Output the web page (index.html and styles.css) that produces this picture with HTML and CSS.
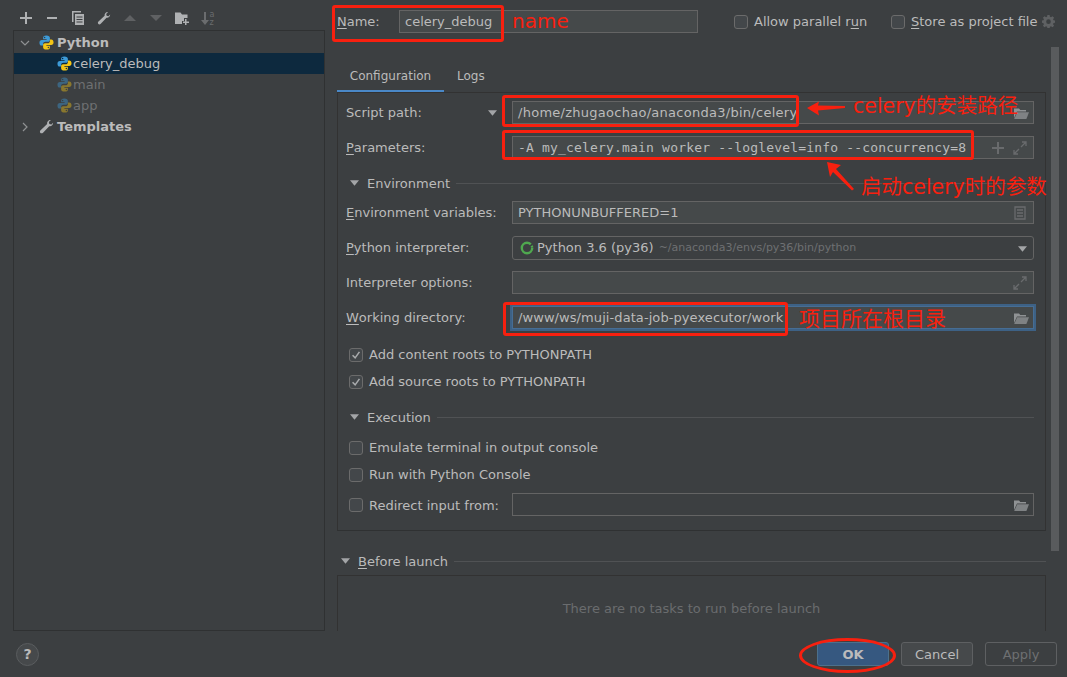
FILE: index.html
```html
<!DOCTYPE html>
<html lang="en">
<head>
<meta charset="utf-8">
<title>Run/Debug Configurations</title>
<link rel="stylesheet" href="styles.css">
</head>
<body>
<svg class="defs" width="0" height="0" aria-hidden="true">
  <defs>
    <symbol id="py" viewBox="0 0 16 16">
      <path fill="#3d9bd8" d="M7.900 .5C4.900 .5 4.400 1.600 4.400 3v1.600h3.700v.7H3C1.500 5.300.5 6.300.5 8.200c0 2 1 3.100 2.300 3.100H4.400V9.400c0-1.300 1.100-2.300 2.400-2.300h2.800c1.100 0 2-.8 2-1.900V3C11.600 1.600 10.400.5 7.900.5zM6 1.900a.8.8 0 1 1 0 1.600a.8.8 0 0 1 0-1.600z"/>
      <path fill="#f4c516" d="M8.100 15.500c3 0 3.500-1.100 3.500-2.500v-1.600H7.900v-.7H13c1.500 0 2.500-1 2.500-2.900 0-2-1-3.100-2.300-3.100H11.600v1.900c0 1.300-1.100 2.300-2.400 2.300H6.400c-1.100 0-2 .8-2 1.900V13c0 1.400 1.200 2.500 3.700 2.500zM10 14.100a.8.8 0 1 1 0-1.600a.8.8 0 0 1 0 1.600z"/>
    </symbol>
    <symbol id="folder" viewBox="0 0 16 14">
      <path fill="#8f9294" d="M1 2.500h5l1.300 1.500H13v1.500H4L1 12z"/>
      <path fill="#7f8284" d="M4.200 6.300H16l-2.600 6.700H1.200z"/>
    </symbol>
    <symbol id="expand" viewBox="0 0 14 14">
      <path fill="none" stroke="#696b6d" stroke-width="1.300" d="M8 6l4.500-4.500M9 1h4v4M6 8l-4.500 4.500M1 9v4h4"/>
    </symbol>
    <symbol id="wrench" viewBox="0 0 16 16">
      <path fill="#afb1b3" d="M15 4.300c0 2.200-2 3.800-4.100 3.300L4.300 14.600c-.9.900-2.100.9-2.800.2s-.7-1.900.2-2.700l7-6.700C8.200 3.200 10.200.8 12.700 1.100L10.500 3.300l.5 2.100 2.200.5L15 3.900z"/>
    </symbol>
    <symbol id="chk" viewBox="0 0 14 14">
      <path fill="none" stroke="#a9abad" stroke-width="1.800" d="M3 7.300l3 3 5-7"/>
    </symbol>
    <symbol id="tri" viewBox="0 0 10 6">
      <path fill="#a3a5a7" d="M0 0h10L5 6z"/>
    </symbol>
  </defs>
</svg>

<div class="dialog">
  <div class="main">
    <aside class="sidebar">
      <div class="toolbar">
        <svg class="tool" viewBox="0 0 14 14"><path fill="#afb1b3" d="M6 1h2v5h5v2H8v5H6V8H1V6h5z"/></svg>
        <svg class="tool" viewBox="0 0 14 14"><path fill="#afb1b3" d="M2 6h10v2H2z"/></svg>
        <svg class="tool" viewBox="0 0 14 14"><path fill="#afb1b3" d="M1 0h9v1.500H2.500V11H1z"/><path fill="#afb1b3" d="M4 3h9v11H4zm1.500 2.500v1h6v-1zm0 2.500v1h6V8zm0 2.500v1h6v-1z" fill-rule="evenodd"/></svg>
        <svg class="tool"><use href="#wrench"/></svg>
        <svg class="tool" viewBox="0 0 14 14"><path fill="#5f6163" d="M1 10l6-6 6 6z"/></svg>
        <svg class="tool" viewBox="0 0 14 14"><path fill="#5f6163" d="M1 4l6 6 6-6z"/></svg>
        <svg class="tool" viewBox="0 0 14 14"><path fill="#afb1b3" d="M0 1.500h5.500L7 3.500h5.500V7H9v3H7v3H0z"/><path fill="#afb1b3" d="M10 8h1.500v2.500H14V12h-2.500v2H10v-2H8v-1.500h2z"/></svg>
        <svg class="tool sort" viewBox="0 0 16 16"><path fill="#6a6c6e" d="M4 2h2v8h3l-4 5-4-5h3z"/><text x="9.500" y="7" class="sort-t">a</text><text x="9.500" y="15" class="sort-t">z</text></svg>
      </div>
      <div class="tree">
        <div class="tree-row top">
          <svg class="arrow" viewBox="0 0 10 10"><path fill="none" stroke="#8f9193" stroke-width="1.200" d="M1 3l4 4 4-4"/></svg>
          <svg class="ico"><use href="#py"/></svg>
          <span class="strong">Python</span>
        </div>
        <div class="tree-row child selected">
          <svg class="ico"><use href="#py"/></svg><span class="bright">celery_debug</span>
        </div>
        <div class="tree-row child dim">
          <svg class="ico"><use href="#py"/></svg><span>main</span>
        </div>
        <div class="tree-row child dim">
          <svg class="ico"><use href="#py"/></svg><span>app</span>
        </div>
        <div class="tree-row top">
          <svg class="arrow" viewBox="0 0 10 10"><path fill="none" stroke="#8f9193" stroke-width="1.200" d="M3 1l4 4-4 4"/></svg>
          <svg class="ico"><use href="#wrench"/></svg>
          <span class="strong">Templates</span>
        </div>
      </div>
    </aside>

    <section class="content">
      <div class="name-row">
        <label class="name-label"><u>N</u>ame:</label>
        <div class="field name-field">celery_debug</div>
        <label class="check top-check parallel"><span class="box"></span>Allow parallel r<u>u</u>n</label>
        <label class="check top-check store"><span class="box"></span><span><u>S</u>tore as project file</span></label>
        <svg class="gear" viewBox="0 0 14 14"><path fill="#5f6163" fill-rule="evenodd" d="M5.800 0h2.400l.3 1.900 1.200.5L11.300 1.300 13 3 11.900 4.500l.5 1.200 1.600.3v2.400l-1.600.3-.5 1.200 1.100 1.600-1.700 1.700-1.600-1.100-1.200.5-.3 1.900H5.800l-.3-1.900-1.200-.5-1.600 1.100L1 11.600l1.100-1.600-.5-1.200L0 8.400V6l1.600-.3.500-1.200L1 3 2.700 1.300l1.600 1.100 1.200-.5zM7 4.700a2.500 2.500 0 1 0 0 5 2.500 2.500 0 0 0 0-5z"/></svg>
      </div>

      <div class="tabs">
        <div class="tab active">Configuration</div>
        <div class="tab">Logs</div>
      </div>

      <div class="panel">
        <div class="row">
          <label class="label script-label">Script path:<svg class="drop"><use href="#tri"/></svg></label>
          <div class="field grow wide-text">/home/zhugaochao/anaconda3/bin/celery<svg class="f-ico"><use href="#folder"/></svg></div>
        </div>
        <div class="row">
          <label class="label"><u>P</u>arameters:</label>
          <div class="field grow mono">-A my_celery.main worker --loglevel=info --concurrency=8
            <svg class="f-plus" viewBox="0 0 12 12"><path fill="#696b6d" d="M5 0h2v5h5v2H7v5H5V7H0V5h5z"/></svg>
            <svg class="f-exp"><use href="#expand"/></svg>
          </div>
        </div>

        <div class="section env">
          <svg class="sec-tri"><use href="#tri"/></svg><span class="sec-title">Environment</span><span class="rule"></span>
        </div>

        <div class="row">
          <label class="label"><u>E</u>nvironment variables:</label>
          <div class="field grow">PYTHONUNBUFFERED=1
            <svg class="f-doc" viewBox="0 0 12 14"><path fill="none" stroke="#696b6d" stroke-width="1.300" d="M1 1h10v12H1zM3 4h6M3 7h6M3 10h6"/></svg>
          </div>
        </div>
        <div class="row">
          <label class="label"><u>P</u>ython interpreter:</label>
          <div class="field grow combo">
            <svg class="ring" viewBox="0 0 14 14"><circle cx="7" cy="7" r="5.200" fill="none" stroke="#4fa84f" stroke-width="2.400" stroke-dasharray="28 1.500 2 1"/></svg>
            <span>Python 3.6 (py36)</span><span class="path">~/anaconda3/envs/py36/bin/python</span>
            <svg class="combo-tri"><use href="#tri"/></svg>
          </div>
        </div>
        <div class="row">
          <label class="label">Interpreter options:</label>
          <div class="field grow"><svg class="f-exp f-exp-solo"><use href="#expand"/></svg></div>
        </div>
        <div class="row">
          <label class="label"><u>W</u>orking directory:</label>
          <div class="field grow focus">/www/ws/muji-data-job-pyexecutor/work<svg class="f-ico"><use href="#folder"/></svg></div>
        </div>

        <div class="checks first">
          <label class="check"><span class="box"><svg class="tick"><use href="#chk"/></svg></span>Add content roots to PYTHONPATH</label>
          <label class="check"><span class="box"><svg class="tick"><use href="#chk"/></svg></span>Add source roots to PYTHONPATH</label>
        </div>

        <div class="section exec">
          <svg class="sec-tri"><use href="#tri"/></svg><span class="sec-title">Execution</span><span class="rule"></span>
        </div>

        <div class="checks">
          <label class="check"><span class="box"></span>Emulate terminal in output console</label>
          <label class="check"><span class="box"></span>Run with Python Console</label>
        </div>
        <div class="row redirect">
          <label class="check label"><span class="box"></span><span class="redirect-text">Redirect input from:</span></label>
          <div class="field grow plain"><svg class="f-ico"><use href="#folder"/></svg></div>
        </div>
      </div>

      <div class="section before">
        <svg class="sec-tri"><use href="#tri"/></svg><span class="sec-title"><u>B</u>efore launch</span><span class="rule"></span>
      </div>
      <div class="tasks"><span>There are no tasks to run before launch</span></div>
    </section>
  </div>

  <footer class="footer">
    <div class="help">?</div>
    <div class="buttons">
      <div class="btn ok">OK</div>
      <div class="btn">Cancel</div>
      <div class="btn off">Apply</div>
    </div>
  </footer>

  <div class="scrollbar"></div>

  <!-- red annotations drawn over the dialog -->
  <div class="mark m-name"></div>
  <div class="mark m-script"></div>
  <div class="mark m-params"></div>
  <div class="mark m-work"></div>
  <div class="mark m-ok"></div>
  <span class="note n-name">name</span>
  <span class="note n-script">celery的安装路径</span>
  <span class="note n-params">启动celery时的参数</span>
  <span class="note n-work">项目所在根目录</span>
  <svg class="pointers" viewBox="0 0 1067 677">
    <path fill="#f8200f" d="M807 108L819 101.500L818 105.500L845 106L845 108L818 110.500L819 115.500z"/>
    <path fill="#f8200f" d="M827 162L841 165L836 169L854 189L852 190.500L833 172L830 177z"/>
  </svg>
</div>
</body>
</html>
```

FILE: styles.css
```css
* { box-sizing: border-box; }
html, body { margin: 0; padding: 0; }
body {
  width: 1067px;
  height: 677px;
  overflow: hidden;
  background: #3c3f41;
  color: #bbbbbb;
  font-family: "DejaVu Sans", sans-serif;
  font-size: 13px;
}
u { text-underline-offset: 2px; }
.defs { position: absolute; }

.dialog { position: relative; width: 1067px; height: 677px; }
.main { display: flex; height: 631px; }

/* left column */
.sidebar { margin-left: 13px; display: flex; flex-direction: column; flex: none; width: 312px; }
.toolbar { display: flex; align-items: center; height: 30px; padding: 6px 0 0 6px; gap: 12px; }
.tool { width: 14px; height: 14px; flex: none; }
.tool.sort { width: 16px; height: 16px; margin-left: -1px; }
.sort-t { font-size: 8px; fill: #6a6c6e; font-family: "DejaVu Sans", sans-serif; }
.tree { flex: 1; border: 1px solid #2f3132; padding-top: 1px; }
.tree-row { display: flex; align-items: center; height: 21px; }
.tree-row.top { padding-left: 6px; }
.tree-row.child { padding-left: 43px; }
.arrow { width: 10px; height: 10px; margin-right: 9px; flex: none; }
.ico { width: 15px; height: 15px; flex: none; margin-right: 1px; }
.top .ico { margin-right: 3px; }
.strong { font-weight: 700; }
.selected { background: #0d293e; }
.bright { color: #bbbbbb; }
.dim { color: #6e7072; }
.dim .ico { opacity: .42; }

/* right column */
.content { width: 709px; margin-left: 12px; flex: none; }
.name-row { display: flex; align-items: center; height: 25px; margin-top: 9px; }
.name-label { width: 62px; flex: none; }
.name-field { width: 299px; flex: none; }
.top-check { height: 23px; }
.parallel { margin-left: 36px; width: 157px; flex: none; }
.store { flex: none; }
.gear { width: 13px; height: 13px; margin-left: 5px; flex: none; }

.tabs { display: flex; height: 29px; margin-top: 29px; }
.tab { height: 29px; padding: 0 13px; line-height: 27px; font-size: 12px; }
.tab.active { width: 107px; padding: 0; text-align: center; border-bottom: 2px solid #4a88c7; }

.panel { border: 1px solid #323232; border-bottom-color: #2f3132; height: 439px; padding: 8px 11px 0 8px; }
.row { display: flex; align-items: center; height: 23px; margin-bottom: 12px; }
.label { width: 166px; flex: none; display: flex; align-items: center; white-space: pre; }
.script-label { position: relative; }
.drop { width: 9px; height: 6px; margin-left: 66px; }

.field {
  position: relative;
  display: flex;
  align-items: center;
  height: 23px;
  padding-left: 5px;
  background: #45494a;
  border: 1px solid #646464;
  white-space: nowrap;
}
.grow { flex: 1; }
.wide-text { letter-spacing: .27px; }
.mono { font-family: "DejaVu Sans Mono", monospace; font-size: 13px; letter-spacing: .18px; }
.plain { background: #3c3f41; }
.combo { background: #3c3f41; border-radius: 3px; height: 24px; padding-left: 7px; }
.focus { background: #45494a; border-color: #466d94; outline: 2px solid #3d6185; outline-offset: 0; letter-spacing: .08px; }
.ring { width: 14px; height: 14px; margin-right: 3px; flex: none; }
.path { margin-left: 5px; font-size: 11px; color: #6e7072; }
.combo-tri { position: absolute; right: 6px; top: 9px; width: 9px; height: 6px; }
.f-ico { position: absolute; right: 4px; top: 4px; width: 16px; height: 14px; }
.f-plus { position: absolute; right: 29px; top: 5px; width: 12px; height: 12px; }
.f-exp { position: absolute; right: 6px; top: 4px; width: 14px; height: 14px; }
.f-doc { position: absolute; right: 7px; top: 4px; width: 12px; height: 14px; }

.section { display: flex; align-items: center; height: 18px; }
.env { margin: 15px 0 9px 4px; }
.exec { margin: 13px 0 8px 4px; }
.sec-tri { width: 9px; height: 6px; flex: none; margin-right: 8px; }
.rule { flex: 1; height: 1px; background: #505254; margin-left: 6px; }
.before { margin: 21px 0 5px 4px; }

.checks.first { margin-top: 0; }
.check { display: flex; align-items: center; height: 27px; }
.box {
  display: flex; align-items: center; justify-content: center;
  width: 14px; height: 14px; margin-right: 6px; flex: none;
  border: 1px solid #6b6b6b; border-radius: 3px; background: #43474a;
}
.checks .box { margin-left: 3px; }
.label.check { height: 23px; }
.label.check .box { margin-left: 3px; }
.redirect-text { position: relative; top: 1px; }
.tick { width: 12px; height: 12px; }
.redirect { margin-top: 5px; margin-bottom: 0; }

.tasks {
  height: 56px;
  border: 1px solid #323232;
  border-bottom: none;
  padding-top: 25px;
  text-align: center;
  color: #6a6c6e;
}

/* footer */
.footer { display: flex; align-items: center; justify-content: space-between; height: 46px; padding: 0 10px 0 16px; }
.help {
  width: 23px; height: 23px; border-radius: 50%;
  display: flex; align-items: center; justify-content: center;
  background: #46494b; border: 1px solid #5a5d5f;
  font-weight: 700; font-size: 14px;
}
.buttons { display: flex; gap: 12px; }
.btn {
  width: 72px; height: 24px; border-radius: 3px;
  display: flex; align-items: center; justify-content: center;
  background: #46494b; border: 1px solid #5e6062;
}
.btn.ok { background: #365880; border-color: #4c708c; font-weight: 700; }
.btn.off { background: transparent; color: #6e7072; border-color: #5e6062; }

/* overlays */
.scrollbar { position: absolute; left: 1051px; top: 47px; width: 8px; height: 504px; background: #595b5d; }
.mark { position: absolute; border: 3px solid #f8200f; border-radius: 3px; }
.m-name { left: 332px; top: 5px; width: 172px; height: 37px; }
.m-script { left: 502px; top: 95px; width: 297px; height: 32px; }
.m-params { left: 502px; top: 130px; width: 472px; height: 30px; }
.m-work { left: 503px; top: 302px; width: 285px; height: 34px; }
.m-ok { left: 799px; top: 638px; width: 97px; height: 35px; border-radius: 50%; }
.note {
  position: absolute;
  color: #f8200f;
  font-family: "DejaVu Sans", "Noto Sans CJK SC", sans-serif;
  font-size: 20.500px;
  line-height: 26px;
  white-space: nowrap;
}
.n-name { left: 512px; top: 8px; font-size: 20px; }
.n-script { left: 853px; top: 93px; }
.n-params { left: 861px; top: 174px; }
.n-work { left: 799px; top: 306px; font-size: 21px; }
.pointers { position: absolute; left: 0; top: 0; width: 1067px; height: 677px; pointer-events: none; }
```
